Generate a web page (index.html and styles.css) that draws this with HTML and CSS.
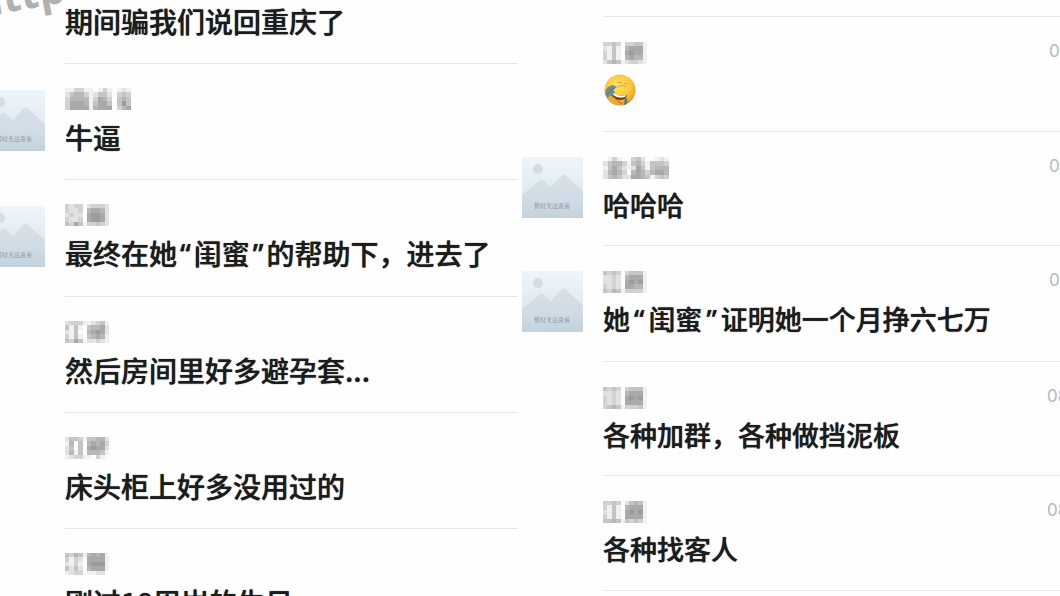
FILE: index.html
```html
<!DOCTYPE html>
<html lang="zh-CN">
<head>
<meta charset="utf-8">
<title>评论</title>
<link rel="stylesheet" href="styles.css">
</head>
<body>
<svg class="defs" aria-hidden="true">
  <defs>
    <linearGradient id="sky" x1="0" y1="0" x2="0" y2="1"><stop offset="0" stop-color="#edf6fa"/><stop offset="1" stop-color="#d5e2ea"/></linearGradient>
    <linearGradient id="hill" x1="0" y1="0" x2="0" y2="1"><stop offset="0" stop-color="#d8e0e7"/><stop offset=".55" stop-color="#d0dce6"/><stop offset="1" stop-color="#c3d2dc"/></linearGradient>
    <radialGradient id="face" cx=".45" cy=".35" r=".65"><stop offset="0" stop-color="#ffe36a"/><stop offset=".65" stop-color="#f8c53b"/><stop offset="1" stop-color="#df962d"/></radialGradient>
    <symbol id="photo" viewBox="0 0 61 61">
      <rect width="61" height="61" fill="url(#sky)"/>
      <circle cx="16" cy="12" r="5" fill="#d2dde4"/>
      <path d="M0 38 L17 24 Q20 21 23 25 L29 30 L39 19 Q42 16 45 20 L61 34 V61 H0Z" fill="url(#hill)"/>
      <text x="30" y="51" text-anchor="middle" class="photo-text">暂时无法查看</text>
    </symbol>
  </defs>
</svg>
<main class="board">
  <section class="panel panel-left">
    <span class="mark">http</span>
    <article class="row row-cut"><div class="body"><p class="text">期间骗我们说回重庆了</p></div></article>
    <article class="row"><svg class="avatar" role="img" aria-label="头像"><use href="#photo"/></svg><div class="body"><svg class="name" data-cells="11331101310121 24553124420343 35555136530454 36665146640474 36666156660356"></svg><p class="text">牛逼</p></div></article>
    <article class="row"><svg class="avatar" role="img" aria-label="头像"><use href="#photo"/></svg><div class="body"><svg class="name" data-cells="3233023332 3223056652 2322067762 3223067762 4364133432"></svg><p class="text">最终在她<span class="quote">“</span>闺蜜<span class="quote">”</span>的帮助下，进去了</p></div></article>
    <article class="row"><div class="body"><svg class="name" data-cells="2333112341 4141045562 2140056762 3141045651 4364122321"></svg><p class="text">然后房间里好多避孕套...</p></div></article>
    <article class="row"><div class="body"><svg class="name" data-cells="2443144552 1504056563 2404067662 2514055541 1233110310"></svg><p class="text">床头柜上好多没用过的</p></div></article>
    <article class="row"><div class="body"><svg class="name" data-cells="4354156561 3132066661 2131067771 4242056661 1233011220"></svg><p class="text">刚过18周岁的生日</p></div></article>
  </section>
  <section class="panel panel-right">
    <div class="row row-stub"><div class="body"></div></div>
    <article class="row"><div class="body"><div class="head"><svg class="name" data-cells="3343033441 2141056661 3141067661 3141056551 2454123321"></svg><time class="time">08</time></div>
      <p class="text"><svg class="emoji" viewBox="0 0 32 32" role="img" aria-label="捂脸笑">
        <circle cx="16" cy="16" r="15.5" fill="url(#face)"/>
        <path d="M13 9q3-2 5 0M20 10q3-2 4 1M14 13l4-2 4 2" fill="none" stroke="#dda034" stroke-width="1"/>
        <path d="M7 19q9 4 16 2-1 5-7 5-7 0-9-7Z" fill="#74351f"/>
        <path d="M9 19q7 4 13 2l-1 2q-7 2-12-2Z" fill="#fff8df"/>
        <path d="M1 19q1-7 8-8l4 2-4 3 2 2-5 7q-4-1-5-6Z" fill="#62909b"/>
        <path d="M4 20q3-6 7-6M21 23q3 1 2 7l-3 1Z" fill="#4d7c8b"/>
        <path d="M3 24l4-3 11 10q-10 1-15-7Z" fill="#edaa34"/>
        <path d="M7 21l11 9M3 20l5-5" stroke="#a56728" fill="none"/>
      </svg></p></div></article>
    <article class="row"><svg class="avatar" role="img" aria-label="头像"><use href="#photo"/></svg><div class="body"><div class="head"><svg class="name" data-cells="01310034200121 24553145314443 14642126414555 25653056535665 24542266541343"></svg><time class="time">08</time></div><p class="text">哈哈哈</p></div></article>
    <article class="row"><svg class="avatar" role="img" aria-label="头像"><use href="#photo"/></svg><div class="body"><div class="head"><svg class="name" data-cells="4343034441 2232056661 2232067671 3232066551 4354133331"></svg><time class="time">08</time></div><p class="text">她<span class="quote">“</span>闺蜜<span class="quote">”</span>证明她一个月挣六七万</p></div></article>
    <article class="row"><div class="body"><div class="head"><svg class="name" data-cells="4343034441 2232056661 3232067671 3232066661 3454133341"></svg><time class="time time-wide">08</time></div><p class="text">各种加群，各种做挡泥板</p></div></article>
    <article class="row"><div class="body"><div class="head"><svg class="name" data-cells="3343024541 3141056661 2141067671 3141066661 4454143431"></svg><time class="time time-wide">08</time></div><p class="text">各种找客人</p></div></article>
  </section>
</main>
<script src="mosaic.js"></script>
</body>
</html>
```
FILE: mosaic.js
```js
// Draws each masked name as a grid of grey cells; digits run from pale to dark.
const shades = ['#fdfdfd', '#f1f1f1', '#e2e2e2', '#d2d2d2', '#c4c4c4', '#b7b7b7', '#a9a9a9', '#9c9c9c'];
document.querySelectorAll('.name').forEach(svg => {
  const rows = svg.dataset.cells.split(' ');
  svg.setAttribute('viewBox', `0 0 ${rows[0].length} ${rows.length}`);
  svg.setAttribute('preserveAspectRatio', 'none');
  if (rows[0].length > 10) svg.classList.add('name-long');
  rows.forEach((row, y) => [...row].forEach((cell, x) => {
    const r = document.createElementNS('http://www.w3.org/2000/svg', 'rect');
    r.setAttribute('x', x);
    r.setAttribute('y', y);
    r.setAttribute('width', 1);
    r.setAttribute('height', 1);
    r.setAttribute('fill', shades[cell]);
    svg.append(r);
  }));
});
```
FILE: styles.css
```css
* { box-sizing: border-box; }
body {
  margin: 0;
  background: #fefefe;
  color: #1c1c1c;
  font-family: "Noto Sans CJK SC", "Noto Sans", sans-serif;
}
.defs { position: absolute; width: 0; height: 0; }
.board {
  display: grid;
  grid-template-columns: 518fr 538fr;
  gap: 4px;
  height: 100vh;
  overflow: hidden;
}
.panel { position: relative; overflow: hidden; min-width: 0; }
.row {
  display: grid;
  grid-template-columns: 61px minmax(0, 1fr);
  column-gap: 20px;
}
.panel-left .row { margin-left: -16px; }
.avatar { width: 61px; height: 61px; margin-top: 26px; }
.panel-right .avatar { margin-top: 25px; }
.photo-text { font-family: "Noto Serif CJK SC", "Noto Sans CJK SC", serif; font-size: 6px; fill: #82909b; }
.body {
  grid-column: 2;
  padding: 24px 0 23px;
  border-bottom: 1px solid #e6e6e6;
}
.panel-right .body { padding: 25px 0 21px; }
.panel-right .row:nth-child(even) .body { padding-bottom: 22px; }
.row-cut .body { padding-top: 2px; }
.panel-right .row-stub .body { padding: 16px 0 0; }
.head { display: flex; justify-content: space-between; }
.name { display: block; width: 44px; height: 22px; shape-rendering: crispEdges; }
.name-long { width: 66px; }
.text {
  margin: 8px 0 0;
  font-size: 28px;
  line-height: 38px;
  font-weight: 500;
  white-space: nowrap;
  text-shadow: 0 0 1px #1c1c1c;
}
.row-cut .text { margin-top: 0; }
.panel-right .text { margin-top: 7px; font-size: 27px; }
.quote { font-family: "Noto Sans", sans-serif; padding: 0 3px; }
.panel-right .quote { padding: 0 4px; }
.emoji { display: block; width: 32px; height: 38px; margin-left: 1px; }
.time {
  width: 11px;
  font-family: Inter, "Liberation Sans", sans-serif;
  font-size: 17px;
  line-height: 18px;
  color: #b8b8b8;
}
.time-wide { width: 13px; }
.mark {
  position: absolute;
  left: -26px;
  top: -34px;
  font-family: "Open Sans", sans-serif;
  font-size: 42px;
  line-height: 56px;
  font-weight: 700;
  color: #b0b0b0;
  transform: rotate(-10deg);
}
```
